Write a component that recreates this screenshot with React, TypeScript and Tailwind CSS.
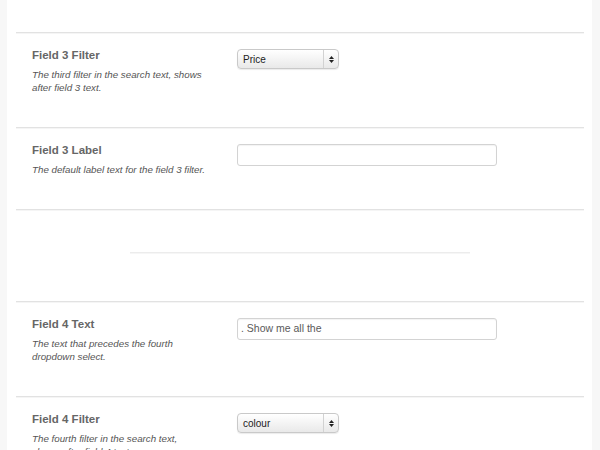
import React from 'react'

const FONT = { fontFamily: '"Liberation Sans", Arial, Helvetica, sans-serif' }

function Separator() {
  return (
    <div>
      <div className="h-px bg-[#e2e2e2]" />
      <div className="h-px bg-[#f5f5f5]" />
    </div>
  )
}

function FakeSelect({ value }: { value: string }) {
  return (
    <div className="flex h-[20px] w-[102px] items-stretch overflow-hidden rounded-[4px] border border-[#c9c9c9] bg-gradient-to-b from-white to-[#e9e9e9] shadow-[0_1px_1px_rgba(0,0,0,0.08)]">
      <div className="flex flex-1 items-center pl-[5px] text-[10px] text-[#222]">{value}</div>
      <div className="w-px bg-[#d2d2d2]" />
      <div className="flex w-[14px] flex-col items-center justify-center gap-[1px]">
        <svg width="5" height="3" viewBox="0 0 5 3">
          <path d="M2.5 0 L5 3 L0 3 Z" fill="#222" />
        </svg>
        <svg width="5" height="3" viewBox="0 0 5 3">
          <path d="M0 0 L5 0 L2.5 3 Z" fill="#222" />
        </svg>
      </div>
    </div>
  )
}

function FakeInput({ value }: { value?: string }) {
  return (
    <div className="flex h-[22px] w-[260px] items-center rounded-[3px] border border-[#d3d3d3] bg-white pl-[3px] text-[10.5px] text-[#5a5a5a] shadow-[inset_0_1px_1px_rgba(0,0,0,0.05)]">
      {value}
    </div>
  )
}

function Row({ label, desc, control }: { label: string; desc: React.ReactNode; control: React.ReactNode }) {
  return (
    <div>
      <Separator />
      <div className="flex pt-[15px] pb-[33px] pl-[16px]">
        <div className="w-[205px] shrink-0">
          <div className="text-[11.5px] font-bold leading-[12px] text-[#666]">{label}</div>
          <p className="mt-[7px] max-w-[190px] text-[9.75px] italic leading-[13px] text-[#555]">{desc}</p>
        </div>
        <div>{control}</div>
      </div>
    </div>
  )
}

export default function App() {
  return (
    <div className="h-[450px] w-[600px] overflow-hidden bg-[#f7f7f7] pl-[7px] pr-[8px]" style={FONT}>
      <div className="h-full bg-white pt-[32px] pl-[9px] pr-[8px]">
        <Row
          label="Field 3 Filter"
          desc={<>The third filter in the search text, shows<br />after field 3 text.</>}
          control={<FakeSelect value="Price" />}
        />
        <Row
          label="Field 3 Label"
          desc="The default label text for the field 3 filter."
          control={<FakeInput />}
        />
        <div>
          <Separator />
          <div className="flex justify-center pt-[41px] pb-[47px]">
            <div className="w-[340px]">
              <div className="h-px bg-[#ececec]" />
              <div className="h-px bg-[#f6f6f6]" />
            </div>
          </div>
        </div>
        <Row
          label="Field 4 Text"
          desc={<>The text that precedes the fourth<br />dropdown select.</>}
          control={<FakeInput value=". Show me all the" />}
        />
        <Row
          label="Field 4 Filter"
          desc={<>The fourth filter in the search text,<br />shows after field 4 text.</>}
          control={<FakeSelect value="colour" />}
        />
      </div>
    </div>
  )
}
